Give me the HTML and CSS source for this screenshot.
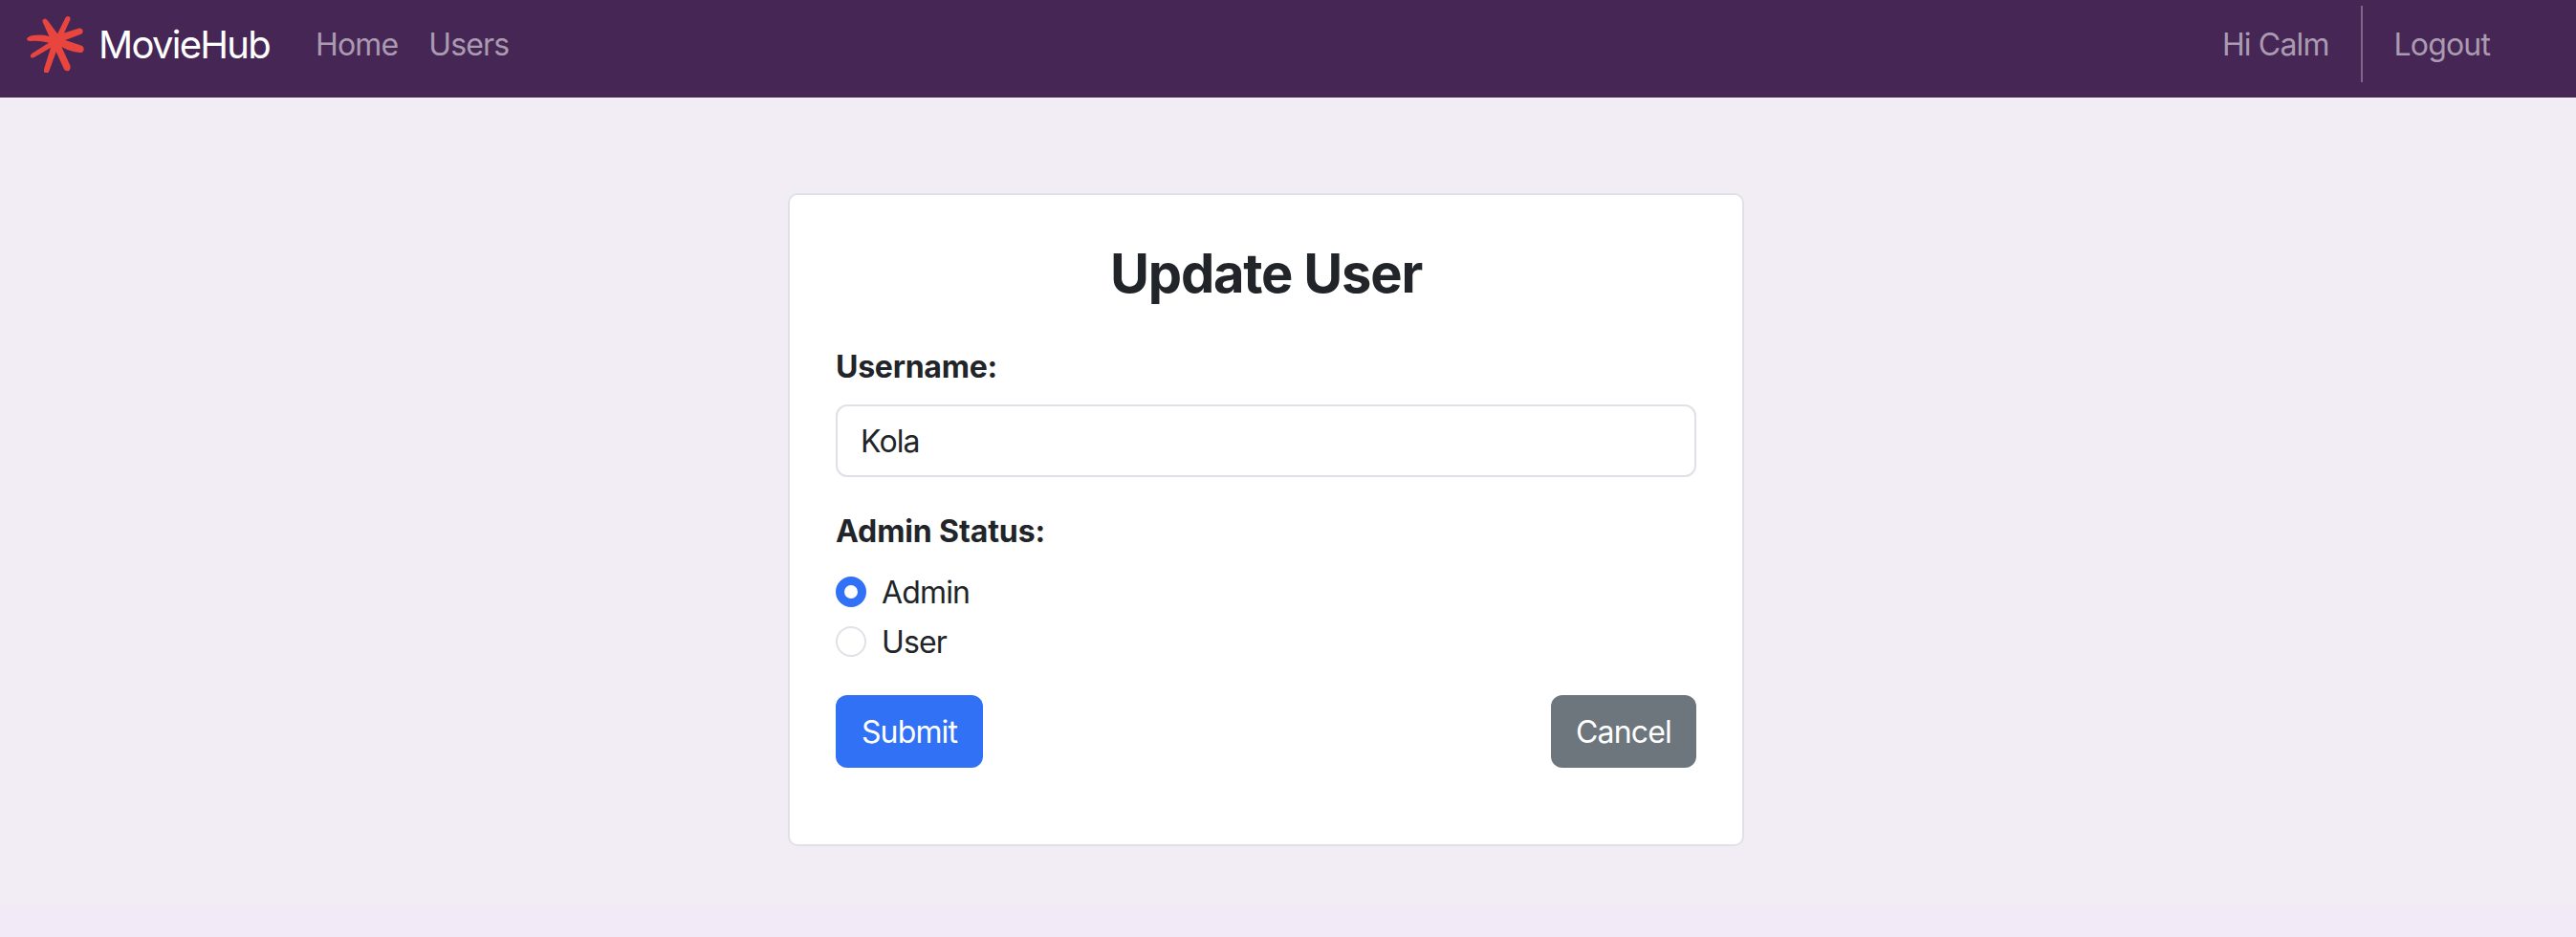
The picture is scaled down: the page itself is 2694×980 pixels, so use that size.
FILE: index.html
```html
<!DOCTYPE html>
<html lang="en">
<head>
<meta charset="utf-8">
<title>MovieHub - Update User</title>
<link rel="stylesheet" href="styles.css">
</head>
<body>
<nav class="navbar">
  <a class="brand">
    <svg class="logo" viewBox="0 0 60 60" aria-hidden="true">
      <path d="M15.6 19.3Q17.5 17.3 19.8 20L30.4 34.2L38.8 17.4Q40.7 15 43 16.5Q44.5 18.2 43.4 20.2L37.4 33.6L53 28.6Q56.2 28.4 57 31Q57.2 33.9 55 34.8L38.5 41L54.5 46.3Q58.2 47.3 58 51Q57.4 54.4 53.5 54.1Q43 53 34.7 48.1L43.8 67.7Q44.4 71.3 42.5 73Q38.5 74.2 37 70.8L29 53.2L21.4 74Q20 76.2 17.6 75.4Q15.6 74.3 16.4 71L23.3 49L5.5 59.2Q3.2 60 2.2 58.4Q1.9 56 4 54.8L21.3 43.8Q11 41.2 2 42Q-1.3 42.1-1.7 40Q-1 36.8 5 36Q13.5 34.7 21.7 37L14.8 21.7Q14.4 20.3 15.6 19.3Z" transform="translate(1.7 -15)"/>
    </svg>
    <span class="brand-name">MovieHub</span>
  </a>
  <div class="links">
    <a class="link">Home</a>
    <a class="link">Users</a>
  </div>
  <div class="account">
    <a class="link">Hi Calm</a>
    <div class="divider"></div>
    <a class="link">Logout</a>
  </div>
</nav>
<main class="content">
  <form class="card">
    <h2 class="title">Update User</h2>
    <label class="label" for="username">Username:</label>
    <input class="field" id="username" type="text" value="Kola">
    <div class="label label-status">Admin Status:</div>
    <div class="choices">
      <label class="choice"><input class="radio" type="radio" name="status" checked><span class="choice-text">Admin</span></label>
      <label class="choice"><input class="radio" type="radio" name="status"><span class="choice-text">User</span></label>
    </div>
    <div class="actions">
      <button class="button submit" type="button">Submit</button>
      <button class="button cancel" type="button">Cancel</button>
    </div>
  </form>
</main>
<footer class="footer"></footer>
</body>
</html>
```
FILE: styles.css
```css
* { box-sizing: border-box; }
body {
  margin: 0;
  height: 980px;
  display: flex;
  flex-direction: column;
  overflow: hidden;
  background: #f2edf4;
  color: #212529;
  font: 440 32px/48px Inter, "Liberation Sans", sans-serif;
  letter-spacing: -0.85px;
}
.navbar {
  display: flex;
  align-items: center;
  height: 102px;
  padding: 6px 90px 16px 28px;
  background: #462655;
}
.brand { display: flex; align-items: center; color: #fff; font-size: 40px; line-height: 60px; letter-spacing: -1.7px; width: 302px; }
.brand-name { padding-top: 2px; }
.logo { width: 60px; height: 60px; margin-right: 15px; fill: #e8453f; }
.links { display: flex; gap: 32px; }
.link { padding-top: 2px; color: #aa9bb1; }
.account { display: flex; align-items: center; margin-left: auto; }
.divider { width: 2px; height: 80px; margin: 0 33px 0 33px; background: #7d6688; }
.content { flex: none; height: 845px; padding: 100px 0 0 824px; }
.card {
  width: 1000px;
  height: 683px;
  padding: 49px 48px 48px;
  border: 2px solid #dee2e6;
  border-radius: 10px;
  background: #fff;
}
.title { margin: 0 0 40px; font-size: 56px; line-height: 67px; font-weight: 700; text-align: center; letter-spacing: -1.2px; }
.label { display: block; font-weight: 700; margin-bottom: 15px; letter-spacing: -0.25px; }
.label-status { padding-top: 1px; letter-spacing: -0.1px; }
.field {
  display: block;
  width: 900px;
  height: 76px;
  margin: 0 0 32px;
  padding: 12px 24px;
  border: 2px solid #dee2e6;
  border-radius: 12px;
  background: #fff;
  color: inherit;
  font: inherit;
  letter-spacing: inherit;
}
.choices { display: flex; flex-direction: column; gap: 4px; margin-bottom: 32px; }
.choice { display: flex; align-items: center; height: 48px; }
.choice-text { padding-top: 2px; }
.radio {
  appearance: none;
  width: 32px;
  height: 32px;
  margin: 0 16px 0 0;
  border: 2px solid #dee2e6;
  border-radius: 50%;
  background: #fff;
}
.radio:checked { border: 9px solid #3071f5; }
.actions { display: flex; justify-content: space-between; width: 900px; }
.button { height: 76px; padding: 2px 0 0; border: 0; border-radius: 12px; color: #fff; font: inherit; letter-spacing: inherit; }
.submit { width: 154px; background: #3071f5; }
.cancel { width: 152px; background: #6d757d; }
.footer { height: 33px; background: #f2eaf6; }
```
